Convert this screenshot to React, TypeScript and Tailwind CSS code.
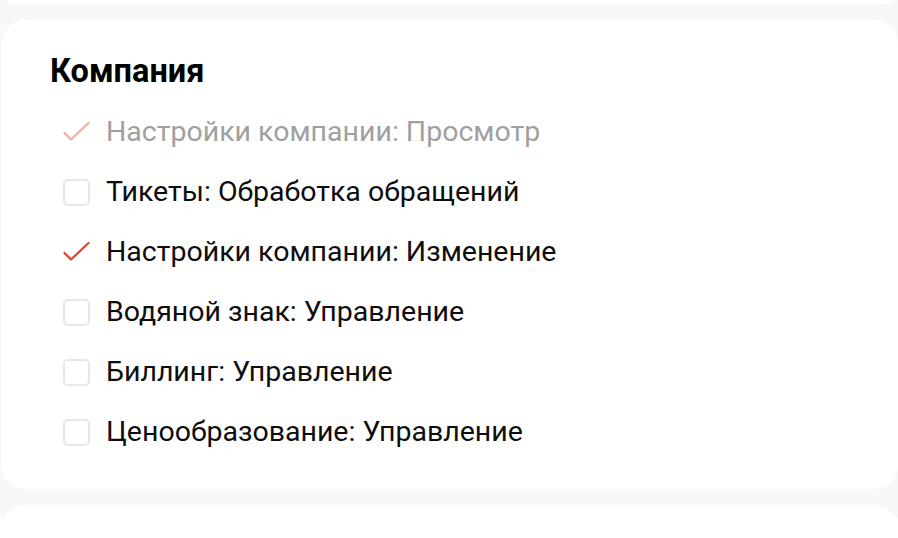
import React from 'react';

type Perm = { label: string; checked: boolean; disabled?: boolean };

const perms: Perm[] = [
  { label: 'Настройки компании: Просмотр', checked: true, disabled: true },
  { label: 'Тикеты: Обработка обращений', checked: false },
  { label: 'Настройки компании: Изменение', checked: true },
  { label: 'Водяной знак: Управление', checked: false },
  { label: 'Биллинг: Управление', checked: false },
  { label: 'Ценообразование: Управление', checked: false },
];

function CheckMark({ faded }: { faded?: boolean }) {
  return (
    <svg
      viewBox="0 0 28 28"
      className={`w-[28px] h-[28px] ${faded ? 'text-[#f7aca3]' : 'text-[#e9432c]'}`}
      fill="none"
      stroke="currentColor"
      strokeWidth={2.3}
      strokeLinecap="round"
      strokeLinejoin="round"
    >
      <path d="M2.5 15 9 21.5 26.5 5" />
    </svg>
  );
}

function Row({ perm }: { perm: Perm }) {
  return (
    <label className="flex items-center gap-[16px] h-[60px]">
      <span className="w-[28px] h-[28px] flex items-center justify-center">
        {perm.checked ? (
          <CheckMark faded={perm.disabled} />
        ) : (
          <span className="w-[27px] h-[27px] rounded-[5px] border-2 border-[#e7e7e7] bg-white" />
        )}
      </span>
      <span className={`text-[28.5px] leading-[40px] ${perm.disabled ? 'text-[#a0a0a0]' : 'text-[#0d0d0d]'}`}>
        {perm.label}
      </span>
    </label>
  );
}

export default function App() {
  return (
    <div className="w-[898px] h-[538px] overflow-hidden bg-[#f8f8f8] flex flex-col gap-4 -mt-[20px] pl-[2px] font-['Roboto',sans-serif]">
      <div className="h-[24px] shrink-0 bg-white rounded-[24px]" />
      <section className="bg-white rounded-[24px] shrink-0 pl-[48px] pt-[31px] pb-[27px]">
        <h2 className="text-[32.5px] leading-[40px] font-bold text-black mb-[11px]">Компания</h2>
        <div className="pl-[12px] flex flex-col">
          {perms.map((p) => (
            <Row key={p.label} perm={p} />
          ))}
        </div>
      </section>
      <div className="h-[80px] shrink-0 bg-white rounded-[24px]" />
    </div>
  );
}
